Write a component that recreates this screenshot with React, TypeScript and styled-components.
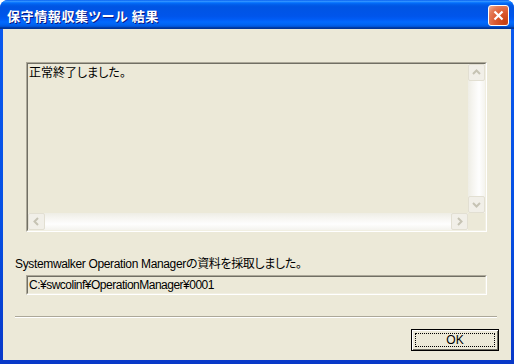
import React from "react";
import styled, { createGlobalStyle } from "styled-components";

const GlobalStyle = createGlobalStyle`
  html, body {
    margin: 0;
    padding: 0;
    background: #ffffff;
  }
  body {
    font-family: "Liberation Sans", "Noto Sans CJK JP", sans-serif;
    font-size: 12px;
    color: #000;
  }
`;

const Window = styled.div`
  width: 514px;
  height: 364px;
  display: flex;
  flex-direction: column;
  background: linear-gradient(to bottom, #0a5af0 0%, #0650e4 60%, #0838c8 100%);
  border-radius: 8px 8px 0 0;
  overflow: hidden;
`;

const TitleBar = styled.div`
  height: 29px;
  flex: none;
  display: flex;
  align-items: center;
  justify-content: space-between;
  padding: 0 5px 0 7px;
  box-sizing: border-box;
  background: linear-gradient(
    to bottom,
    #0058ee 0%,
    #3593ff 4%,
    #288eff 6%,
    #127dff 8%,
    #036ffc 10%,
    #0262ee 14%,
    #0057e5 20%,
    #0054e3 24%,
    #0055eb 56%,
    #005bf5 66%,
    #026afe 76%,
    #0062ef 86%,
    #0052d6 92%,
    #0040ab 94%,
    #003092 100%
  );
`;

const Title = styled.span`
  font-family: "Noto Sans CJK JP", sans-serif;
  font-feature-settings: "palt";
  font-weight: bold;
  font-size: 13px;
  letter-spacing: 0.6px;
  color: #ffffff;
  text-shadow: 1px 1px 0 #0a1883;
  margin-top: 1px;
`;

const CloseButton = styled.div`
  width: 21px;
  height: 21px;
  box-sizing: border-box;
  margin-top: 2px;
  border: 1px solid #ffffff;
  border-radius: 3px;
  display: flex;
  align-items: center;
  justify-content: center;
  background: radial-gradient(circle at 85% 85%, #c84010 0%, #dc5a30 45%, #e47c58 75%, #f2b49a 100%);
`;

const Body = styled.div`
  flex: 1;
  margin: 0 3px 4px;
  padding: 33px 12px 0 12px;
  background: #ece9d8;
  display: flex;
  flex-direction: column;
`;

const Sunken = styled.div<{ $height: number; $gap?: number }>`
  margin: ${({ $gap = 0 }) => $gap}px 12px 0 11px;
  height: ${({ $height }) => $height}px;
  box-sizing: border-box;
  border: 1px solid;
  border-color: #aca899 #ffffff #ffffff #aca899;
  flex: none;
`;

const SunkenInner = styled.div`
  height: 100%;
  box-sizing: border-box;
  border: 1px solid;
  border-color: #716f64 #f1efe2 #f1efe2 #716f64;
`;

const ScrollArea = styled(SunkenInner)`
  display: grid;
  grid-template-columns: 1fr 17px;
  grid-template-rows: 1fr 17px;
`;

const MessageText = styled.div`
  font-family: "Noto Sans CJK JP", sans-serif;
  font-feature-settings: "palt";
  line-height: 14px;
  padding: 1px 1px;
`;

const VTrack = styled.div`
  display: flex;
  flex-direction: column;
  justify-content: space-between;
  background: linear-gradient(to right, #eeede5 0%, #f5f4ef 25%, #fefefe 65%, #f4f3ee 100%);
`;

const HTrack = styled.div`
  display: flex;
  justify-content: space-between;
  background: linear-gradient(to bottom, #eeede5 0%, #f5f4ef 25%, #fefefe 65%, #f4f3ee 100%);
`;

const Corner = styled.div`
  background: #ece9d8;
`;

const ScrollButton = styled.div`
  width: 17px;
  height: 17px;
  box-sizing: border-box;
  border: 1px solid #e2dfd2;
  border-radius: 2px;
  background: #f1efe8;
  display: flex;
  align-items: center;
  justify-content: center;
`;

const Label = styled.div`
  margin-top: 25px;
  line-height: 14px;
  letter-spacing: -0.35px;
  font-feature-settings: "palt";
`;

const PathText = styled.div`
  line-height: 16px;
  padding-left: 1px;
  letter-spacing: -0.5px;
`;

const Separator = styled.div`
  margin: 21px 2px 0 0;
  border-top: 1px solid #aca899;
  border-bottom: 1px solid #ffffff;
`;

const ButtonRow = styled.div`
  margin-top: 11px;
  display: flex;
  justify-content: flex-end;
`;

const OkButton = styled.div`
  position: relative;
  width: 88px;
  height: 22px;
  box-sizing: border-box;
  border: 1px solid #000000;
  background: #ece9d8;
  box-shadow: inset 1px 1px 0 #ffffff, inset -1px -1px 0 #716f64;
  display: flex;
  align-items: center;
  justify-content: center;
  font-size: 12px;

  &::after {
    content: "";
    position: absolute;
    inset: 3px;
    border: 1px dotted #000000;
  }
`;

type Dir = "up" | "down" | "left" | "right";

const chevrons: Record<Dir, string> = {
  up: "4,9 7.5,5.5 11,9",
  down: "4,6 7.5,9.5 11,6",
  left: "9,4 5.5,7.5 9,11",
  right: "6,4 9.5,7.5 6,11",
};

const Arrow: React.FC<{ dir: Dir }> = ({ dir }) => (
  <ScrollButton>
    <svg width="15" height="15" viewBox="0 0 15 15">
      <polyline points={chevrons[dir]} fill="none" stroke="#c6c3b4" strokeWidth="2" />
    </svg>
  </ScrollButton>
);

export default function App() {
  return (
    <>
      <GlobalStyle />
      <Window>
        <TitleBar>
          <Title>保守情報収集ツール 結果</Title>
          <CloseButton>
            <svg width="13" height="13" viewBox="0 0 13 13">
              <path d="M2.5 2.5 L10.5 10.5 M10.5 2.5 L2.5 10.5" stroke="#ffffff" strokeWidth="2.2" />
            </svg>
          </CloseButton>
        </TitleBar>
        <Body>
          <Sunken $height={170}>
            <ScrollArea>
              <MessageText>正常終了しました。</MessageText>
              <VTrack>
                <Arrow dir="up" />
                <Arrow dir="down" />
              </VTrack>
              <HTrack>
                <Arrow dir="left" />
                <Arrow dir="right" />
              </HTrack>
              <Corner />
            </ScrollArea>
          </Sunken>
          <Label>Systemwalker Operation Managerの資料を採取しました。</Label>
          <Sunken $height={20} $gap={4}>
            <SunkenInner>
              <PathText>C:¥swcolinf¥OperationManager¥0001</PathText>
            </SunkenInner>
          </Sunken>
          <Separator />
          <ButtonRow>
            <OkButton>OK</OkButton>
          </ButtonRow>
        </Body>
      </Window>
    </>
  );
}
